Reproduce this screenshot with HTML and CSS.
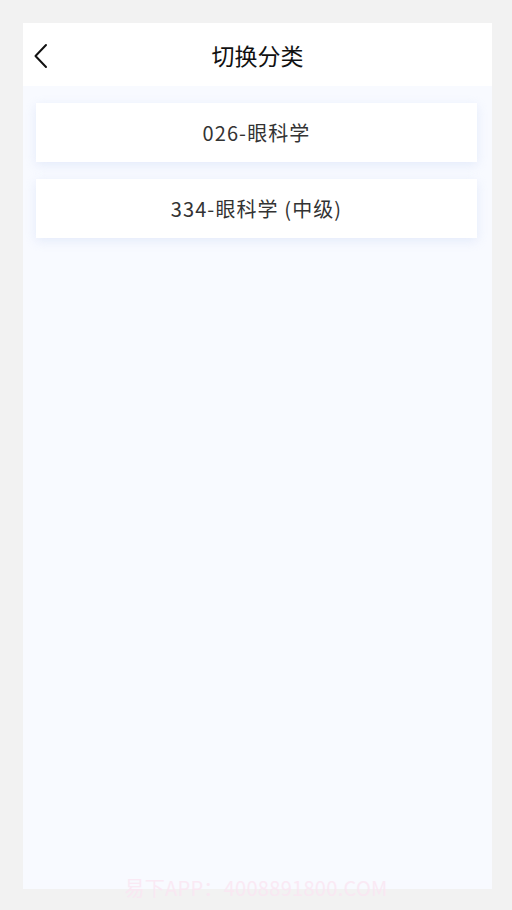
FILE: index.html
```html
<!DOCTYPE html>
<html lang="zh">
<head>
<meta charset="utf-8">
<link rel="stylesheet" href="styles.css">
</head>
<body>
<div class="frame">
  <header class="header">
    <div class="back">
      <svg width="16" height="26" viewBox="0 0 16 26"><path d="M13 2 L2.5 13 L13 24" fill="none" stroke="#111" stroke-width="2" stroke-linecap="round" stroke-linejoin="round"/></svg>
    </div>
    <h1 class="title">切换分类</h1>
    <div class="spacer"></div>
  </header>
  <main class="content">
    <div class="card">026-眼科学</div>
    <div class="card">334-眼科学 (中级)</div>
  </main>
</div>
<div class="watermark">易下APP：4008891800.COM</div>
</body>
</html>
```
FILE: styles.css
```css
html, body {
  margin: 0;
  padding: 0;
}
body {
  background: #f2f2f2;
  width: 512px;
  height: 910px;
  box-sizing: border-box;
  padding: 23px 20px 21px 23px;
  font-family: "Noto Sans CJK SC", "Noto Sans", sans-serif;
  position: relative;
}
.frame {
  width: 469px;
  height: 866px;
  background: #f8faff;
  display: flex;
  flex-direction: column;
}
.header {
  height: 63px;
  background: #ffffff;
  display: grid;
  grid-template-columns: 60px 1fr 60px;
  align-items: center;
}
.back {
  padding-left: 10px;
  display: flex;
  align-items: center;
  padding-top: 2px;
}
.title {
  margin: 0;
  text-align: center;
  font-size: 23px;
  font-weight: 400;
  color: #111;
  line-height: 1;
  padding-top: 1px;
}
.content {
  padding: 17px 15px 0 13px;
  display: flex;
  flex-direction: column;
  gap: 17px;
}
.card {
  height: 59px;
  background: #ffffff;
  display: flex;
  align-items: center;
  justify-content: center;
  font-size: 20px;
  letter-spacing: 1.1px;
  color: #333;
  box-shadow: 0 3px 10px rgba(205, 218, 245, 0.45);
}
.watermark {
  position: absolute;
  left: 0;
  right: 0;
  top: 873px;
  text-align: center;
  font-family: "Noto Sans CJK SC", "Noto Sans", sans-serif;
  font-size: 20px;
  color: #fbe6f2;
  opacity: 0.8;
  letter-spacing: 0.3px;
}
```
